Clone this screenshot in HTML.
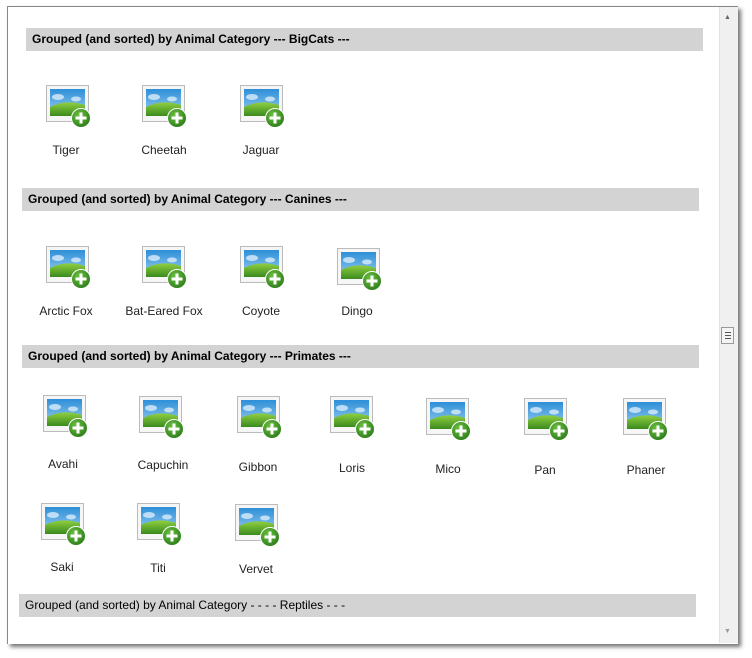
<!DOCTYPE html>
<html><head><meta charset="utf-8"><style>
body{margin:0;width:752px;height:658px;background:#fff;position:relative;overflow:hidden;font-family:"Liberation Sans",sans-serif;}
.frame{position:absolute;left:7px;top:6px;width:730px;height:637px;border-top:1px solid #888;border-left:1px solid #888;box-shadow:3px 3px 4px #777;background:#fff;}
.sb{position:absolute;left:719px;top:7px;width:18px;height:636px;background:#f0f0f0;border-left:1px solid #e2e2e2;}
.thumb{position:absolute;left:721px;top:327px;width:13px;height:17px;border:1px solid #999;background:#f4f4f4;box-sizing:border-box;}
.thumb i{position:absolute;left:3px;width:6px;height:1px;background:#555;}
.h{position:absolute;height:23px;width:677px;background:#d3d3d3;font-size:12px;font-weight:bold;line-height:23px;box-sizing:border-box;padding-left:6px;color:#000;}
.ic{position:absolute;width:52px;height:46px;}
.l{position:absolute;font-size:12px;color:#222;width:100px;text-align:center;}
</style></head><body>
<div class="frame"></div>
<div class="sb"></div>
<div style="position:absolute;left:724px;top:14px;font-size:7px;color:#666">▲</div>
<div style="position:absolute;left:724px;top:628px;font-size:7px;color:#999">▼</div>
<div class="thumb"><i style="top:4px"></i><i style="top:7px"></i><i style="top:10px"></i></div>
<svg width="0" height="0" style="position:absolute"><defs>
<linearGradient id="sky" x1="0" y1="0" x2="0" y2="1"><stop offset="0" stop-color="#2e8fd8"/><stop offset="1" stop-color="#9fd0f0"/></linearGradient>
<linearGradient id="gr" x1="0" y1="0" x2="0" y2="1"><stop offset="0" stop-color="#8fcf40"/><stop offset="1" stop-color="#3a8a1e"/></linearGradient>
<radialGradient id="gb" cx=".4" cy=".35" r=".7"><stop offset="0" stop-color="#6cc040"/><stop offset="1" stop-color="#2a7a18"/></radialGradient>
<g id="icon">
<rect x="0.5" y="0.5" width="42" height="36" fill="#f6f6f6" stroke="#bbb"/>
<rect x="4" y="4" width="35" height="27" fill="url(#sky)"/>
<ellipse cx="12" cy="12" rx="6" ry="3" fill="#d8ecfa" opacity=".8"/>
<ellipse cx="30" cy="14" rx="5" ry="2.5" fill="#d8ecfa" opacity=".8"/>
<path d="M4 22 Q20 14 39 20 L39 31 L4 31 Z" fill="url(#gr)"/>
<circle cx="35" cy="33" r="9.5" fill="url(#gb)" stroke="#fff" stroke-width="1"/>
<rect x="29.5" y="31.5" width="11" height="3" fill="#fff"/><rect x="33.5" y="27.5" width="3" height="11" fill="#fff"/>
</g></defs></svg>

<div class="h" style="left:26px;top:28px">Grouped (and sorted) by Animal Category --- BigCats ---</div>
<div class="h" style="left:22px;top:188px">Grouped (and sorted) by Animal Category --- Canines ---</div>
<div class="h" style="left:22px;top:345px">Grouped (and sorted) by Animal Category --- Primates ---</div>
<div class="h" style="left:19px;top:594px;font-weight:normal;font-family:'Liberation Sans Narrow','Liberation Sans',sans-serif">Grouped (and sorted) by Animal Category - - - - Reptiles - - -</div>

<svg class="ic" style="left:46px;top:85px"><use href="#icon"/></svg>
<svg class="ic" style="left:142px;top:85px"><use href="#icon"/></svg>
<svg class="ic" style="left:240px;top:85px"><use href="#icon"/></svg>
<div class="l" style="left:16px;top:143px">Tiger</div>
<div class="l" style="left:114px;top:143px">Cheetah</div>
<div class="l" style="left:211px;top:143px">Jaguar</div>

<svg class="ic" style="left:46px;top:246px"><use href="#icon"/></svg>
<svg class="ic" style="left:142px;top:246px"><use href="#icon"/></svg>
<svg class="ic" style="left:240px;top:246px"><use href="#icon"/></svg>
<svg class="ic" style="left:337px;top:248px"><use href="#icon"/></svg>
<div class="l" style="left:16px;top:304px">Arctic Fox</div>
<div class="l" style="left:114px;top:304px">Bat-Eared Fox</div>
<div class="l" style="left:211px;top:304px">Coyote</div>
<div class="l" style="left:307px;top:304px">Dingo</div>

<svg class="ic" style="left:43px;top:395px"><use href="#icon"/></svg>
<svg class="ic" style="left:139px;top:396px"><use href="#icon"/></svg>
<svg class="ic" style="left:237px;top:396px"><use href="#icon"/></svg>
<svg class="ic" style="left:330px;top:396px"><use href="#icon"/></svg>
<svg class="ic" style="left:426px;top:398px"><use href="#icon"/></svg>
<svg class="ic" style="left:524px;top:398px"><use href="#icon"/></svg>
<svg class="ic" style="left:623px;top:398px"><use href="#icon"/></svg>
<div class="l" style="left:13px;top:457px">Avahi</div>
<div class="l" style="left:113px;top:458px">Capuchin</div>
<div class="l" style="left:208px;top:460px">Gibbon</div>
<div class="l" style="left:302px;top:461px">Loris</div>
<div class="l" style="left:398px;top:462px">Mico</div>
<div class="l" style="left:495px;top:463px">Pan</div>
<div class="l" style="left:596px;top:463px">Phaner</div>

<svg class="ic" style="left:41px;top:503px"><use href="#icon"/></svg>
<svg class="ic" style="left:137px;top:503px"><use href="#icon"/></svg>
<svg class="ic" style="left:235px;top:504px"><use href="#icon"/></svg>
<div class="l" style="left:12px;top:560px">Saki</div>
<div class="l" style="left:108px;top:561px">Titi</div>
<div class="l" style="left:206px;top:562px">Vervet</div>
</body></html>
